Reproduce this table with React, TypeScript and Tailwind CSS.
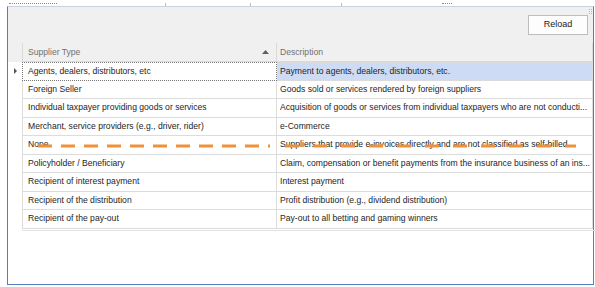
const rows = [
  ["Agents, dealers, distributors, etc", "Payment to agents, dealers, distributors, etc."],
  ["Foreign Seller", "Goods sold or services rendered by foreign suppliers"],
  [
    "Individual taxpayer providing goods or services",
    "Acquisition of goods or services from individual taxpayers who are not conducti...",
  ],
  ["Merchant, service providers (e.g., driver, rider)", "e-Commerce"],
  ["None", "Suppliers that provide e-invoices directly and are not classified as self-billed"],
  [
    "Policyholder / Beneficiary",
    "Claim, compensation or benefit payments from the insurance business of an ins...",
  ],
  ["Recipient of interest payment", "Interest payment"],
  ["Recipient of the distribution", "Profit distribution (e.g., dividend distribution)"],
  ["Recipient of the pay-out", "Pay-out to all betting and gaming winners"],
];

export default function App() {
  return (
    <div className="relative flex h-[287px] w-[595px] flex-col overflow-hidden bg-white font-['Liberation_Sans',Arial,sans-serif] text-[8.6px] text-[#1e1e1e]">
      {/* cut off strip of the panel above */}
      <div className="flex h-[6px] items-start pl-[9px] pt-[3px]">
        <div className="h-px w-[48px] border-t border-dotted border-[#8a8a8a]" />
        <div className="ml-[108px] h-[4px] w-px bg-[#bbb]" />
        <div className="ml-[84px] h-[3px] w-px bg-[#bbb]" />
        <div className="ml-[90px] h-[4px] w-px bg-[#bbb]" />
        <div className="ml-[100px] h-px w-[10px] border-t border-dotted border-[#8a8a8a]" />
      </div>

      <div className="mb-[2px] ml-[7px] mr-px flex flex-1 flex-col border-x-[1.5px] border-b-[1.5px] border-t border-[#4f7fbf] border-t-[#c9d2de]">
        <div className="relative flex h-[36px] shrink-0 items-start justify-end bg-[#f0f0f0] pr-[5px] pt-[8px]">
          <button className="h-[20px] w-[60px] border border-[#bdbdbd] bg-[#fdfdfd] text-[9px] text-[#222]">
            Reload
          </button>
          <div className="absolute right-[1px] top-[2px] grid grid-cols-2 gap-[1px]">
            {Array.from({ length: 6 }).map((_, i) => (
              <span key={i} className="h-px w-px bg-[#b5b5b5]" />
            ))}
          </div>
        </div>

        <div className="flex flex-1 flex-col bg-white">
          <div className="flex h-[19px] shrink-0 bg-[#f0f0f0]">
            <div className="w-[14px]" />
            <div className="flex w-[255px] items-center justify-between border-x border-b border-[#dadada] pl-[5px] pr-[7px] text-[#707070]">
              <span>Supplier Type</span>
              <svg width="7" height="4" viewBox="0 0 7 4">
                <path d="M0 4 L3.5 0 L7 4 Z" fill="#606060" />
              </svg>
            </div>
            <div className="flex flex-1 items-center border-r border-b border-[#dadada] pl-[3px] text-[#707070]">
              Description
            </div>
          </div>

          {rows.map(([type, desc], i) => (
            <div key={type} className="relative flex h-[18.5px] shrink-0">
              <div className="flex w-[14px] items-center justify-center">
                {i === 0 && (
                  <svg width="3" height="6" viewBox="0 0 3 6">
                    <path d="M0 0 L3 3 L0 6 Z" fill="#555" />
                  </svg>
                )}
              </div>
              <div
                className={`flex w-[255px] items-center truncate border-x pl-[5px] ${
                  i === 0
                    ? "border-y border-dotted border-[#777]"
                    : "border-b border-[#dcdcdc]"
                }`}
              >
                {type}
              </div>
              <div
                className={`flex flex-1 items-center overflow-hidden whitespace-nowrap border-r border-b border-[#dcdcdc] pl-[3px] ${
                  i === 0 ? "border-t border-dotted bg-[#cddcf4]" : ""
                }`}
              >
                {desc}
              </div>
              {i === 4 && (
                <svg
                  className="absolute left-0 top-[8px]"
                  width="570"
                  height="4"
                  viewBox="0 0 570 4"
                >
                  <line
                    x1="30"
                    y1="2"
                    x2="262"
                    y2="2"
                    stroke="#f0913a"
                    strokeWidth="3"
                    strokeDasharray="14 9"
                  />
                  <line
                    x1="277"
                    y1="2"
                    x2="568"
                    y2="2"
                    stroke="#f0913a"
                    strokeWidth="3"
                    strokeDasharray="14 14"
                  />
                </svg>
              )}
            </div>
          ))}
          <div className="ml-[14px] h-[2px] w-[585px] border-b border-[#e2e2e2]" />
        </div>
      </div>
    </div>
  );
}
